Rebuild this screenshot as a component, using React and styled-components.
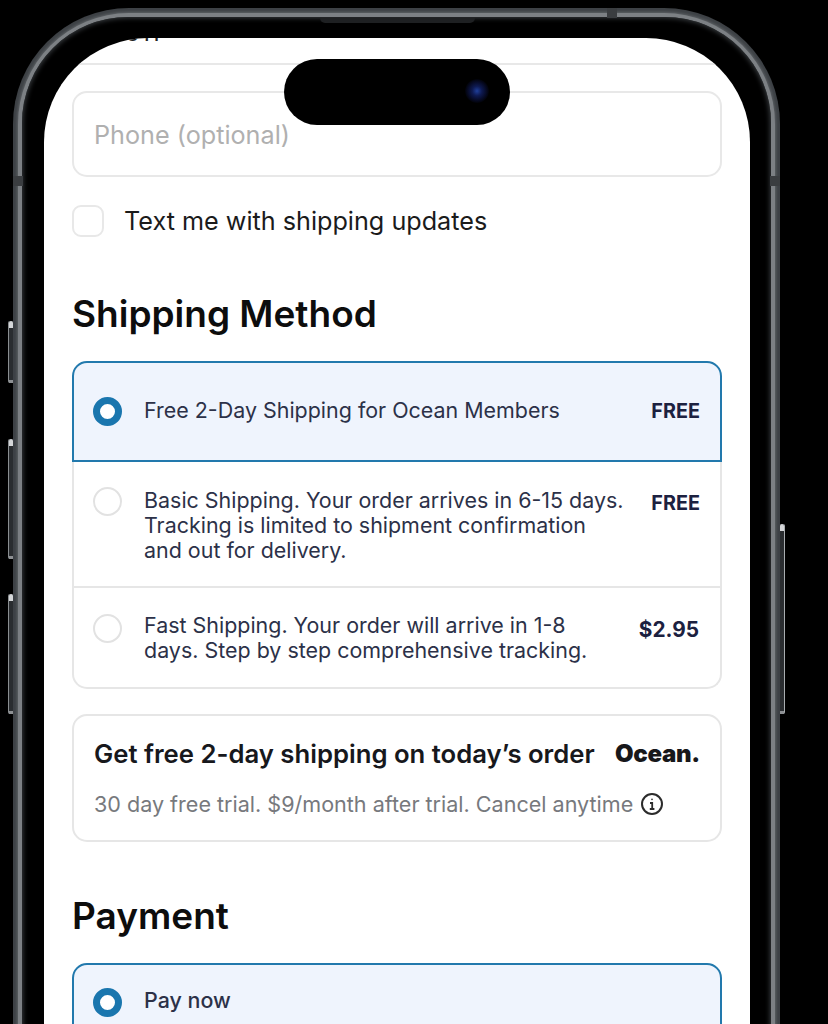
import React from 'react';
import styled, { createGlobalStyle } from 'styled-components';

const GlobalStyle = createGlobalStyle`
    html, body {
        margin: 0;
        padding: 0;
        background: #000;
    }
    body {
        font-family: Inter, "Liberation Sans", sans-serif;
    }
`

const Page = styled.div`
    width: 828px;
    height: 1024px;
    overflow: hidden;
    background: #000;
    padding: 8px 0 0 13px;
    box-sizing: border-box;
`
const Phone = styled.div`
    position: relative;
    width: 767px;
    height: 1300px;
`
const Frame = styled.div`
    height: 100%;
    box-sizing: border-box;
    padding: 5px;
    border-radius: 116px;
    background: #3d4145;
`
const Ring = styled.div`
    height: 100%;
    box-sizing: border-box;
    padding: 4px;
    border-radius: 111px;
    background: #7c8084;
    box-shadow: 0 0 3px 1px #5f6367;
`
const Bezel = styled.div`
    height: 100%;
    box-sizing: border-box;
    padding: 21px 21px 21px 22px;
    border-radius: 106px;
    background: #000;
    box-shadow: inset 0 0 5px 1px #3a3e42;
`
const Screen = styled.div`
    height: 100%;
    box-sizing: border-box;
    padding: 0 28px;
    border-radius: 104px;
    background: #fff;
    overflow: hidden;
`
const Island = styled.div`
    position: absolute;
    top: 51px;
    left: 271px;
    width: 226px;
    height: 66px;
    border-radius: 33px;
    background: #000;
`
const Camera = styled.div`
    position: absolute;
    top: 20px;
    right: 21px;
    width: 24px;
    height: 24px;
    border-radius: 50%;
    background: radial-gradient(circle, #1f3f9a 0, #0e1a52 28%, #060a24 55%, #000 75%);
`
const Speaker = styled.div`
    position: absolute;
    top: 10px;
    left: 307px;
    width: 155px;
    height: 5px;
    border-radius: 0 0 6px 6px;
    background: #1e2022;
`
const Antenna = styled.div`
    position: absolute;
    background: #3a3d40;
    ${p => p.$top ? `top: 0; left: 594px; width: 10px; height: 10px;` : `top: 168px; width: 10px; height: 10px;`}
    ${p => p.$side === 'left' ? 'left: 0;' : ''}
    ${p => p.$side === 'right' ? 'right: 0;' : ''}
`
const SideButton = styled.div`
    position: absolute;
    top: ${p => p.$top}px;
    height: ${p => p.$height}px;
    width: 5px;
    box-sizing: border-box;
    background: #2a2d30;
    ${p => p.$right
        ? 'right: -5px; border-right: 1px solid #a9adb0; border-radius: 0 2px 2px 0;'
        : 'left: -5px; border-left: 1px solid #8a8e91; border-radius: 2px 0 0 2px;'}
    &::before {
        content: '';
        position: absolute;
        top: 0;
        left: 0;
        right: 0;
        height: 7px;
        background: #d4d6d8;
        border-radius: 2px 2px 0 0;
    }
    &::after {
        content: '';
        position: absolute;
        bottom: 0;
        left: 0;
        right: 0;
        height: 3px;
        background: #8d9093;
    }
`
const PrevField = styled.div`
    height: 60px;
    margin-top: -33px;
    box-sizing: border-box;
    border-bottom: 2px solid #e8e8e8;
    padding-left: 53px;
    font-size: 24px;
    line-height: 55px;
    color: #222;
`
const Field = styled.div`
    height: 86px;
    margin-top: 26px;
    box-sizing: border-box;
    display: flex;
    align-items: center;
    padding: 2px 21px 0 20px;
    border: 2px solid #e8e8e8;
    border-radius: 15px;
    font-size: 25.2px;
    color: #b0b0b0;
`
const CheckRow = styled.div`
    display: flex;
    align-items: center;
    gap: 20px;
    margin-top: 28px;
    font-size: 25.2px;
    color: #1b1b1b;
`
const CheckBox = styled.span`
    width: 32px;
    height: 32px;
    box-sizing: border-box;
    border: 2px solid #e8e8e8;
    border-radius: 9px;
`
const Heading = styled.h2`
    margin: ${p => p.$top}px 0 0;
    font-size: 37px;
    line-height: 44px;
    font-weight: 600;
    color: #0d0d0d;
`
const OptionList = styled.div`
    margin-top: ${p => p.$top}px;
    display: flex;
    flex-direction: column;
`
const Option = styled.div`
    display: grid;
    grid-template-columns: 29px 1fr auto;
    column-gap: 22px;
    align-items: start;
    box-sizing: border-box;
    height: ${p => p.$height}px;
    padding: ${p => p.$pad}px 20px 0 19px;
    background: ${p => p.$selected ? '#eff4fd' : '#fff'};
    border: 2px solid ${p => p.$selected ? '#2279ad' : '#e6e6e6'};
    border-top: ${p => p.$selected ? '2px solid #2279ad' : 'none'};
    border-radius: ${p => p.$selected ? '15px 15px 0 0' : p.$last ? '0 0 15px 15px' : '0'};
`
const Radio = styled.span`
    width: 29px;
    height: 29px;
    box-sizing: border-box;
    border-radius: 50%;
    background: #fff;
    border: ${p => p.$on ? '7px solid #1a76ae' : '2px solid #e2e2e2'};
    margin-top: ${p => p.$nudge ?? -1}px;
`
const OptionText = styled.div`
    font-size: 21.45px;
    line-height: 25px;
    font-weight: ${p => p.$medium ? 500 : 400};
    color: #2c3148;
`
const Price = styled.div`
    font-size: ${p => p.$size}px;
    line-height: 25px;
    font-weight: 700;
    color: #1c2140;
    padding-top: ${p => p.$nudge}px;
    padding-right: ${p => p.$inset || 0}px;
`
const OfferCard = styled.div`
    margin-top: 25px;
    height: 128px;
    box-sizing: border-box;
    border: 2px solid #e6e6e6;
    border-radius: 15px;
    padding: 23px 20px 0 20px;
`
const OfferTop = styled.div`
    display: flex;
    justify-content: space-between;
    align-items: center;
    font-size: 25.7px;
    line-height: 30px;
    font-weight: 600;
    color: #17181c;
`
const OceanLogo = styled.span`
    font-size: 24px;
    font-weight: 900;
    letter-spacing: -0.3px;
    color: #17171a;
`
const OfferNote = styled.div`
    display: flex;
    align-items: center;
    gap: 7px;
    margin-top: 20px;
    font-size: 21.55px;
    line-height: 30px;
    color: #77797d;
`
const InfoIcon = () => (
    <svg width="24" height="24" viewBox="0 0 24 24" fill="none" stroke="#2b2b2b" strokeWidth="2">
        <circle cx="12" cy="12" r="10" />
        <path d="M10 11h2.2v6M9.8 17h4.6" strokeWidth="1.8" />
        <circle cx="12" cy="7.4" r="0.8" fill="#2b2b2b" stroke="none" />
    </svg>
)

const App = () => {
    return (
        <>
            <GlobalStyle />
            <Page>
                <Phone>
                    <Frame>
                        <Ring>
                            <Bezel>
                                <Screen>
                                    <PrevField>011</PrevField>
                                    <Field>Phone (optional)</Field>
                                    <CheckRow>
                                        <CheckBox />
                                        Text me with shipping updates
                                    </CheckRow>
                                    <Heading $top={55}>Shipping Method</Heading>
                                    <OptionList $top={25}>
                                        <Option $selected $height={101} $pad={35}>
                                            <Radio $on />
                                            <OptionText>Free 2-Day Shipping for Ocean Members</OptionText>
                                            <Price $size={19.8} $nudge={1}>FREE</Price>
                                        </Option>
                                        <Option $height={126} $pad={26}>
                                            <Radio />
                                            <OptionText>
                                                Basic Shipping. Your order arrives in 6-15 days.<br />
                                                Tracking is limited to shipment confirmation<br />
                                                and out for delivery.
                                            </OptionText>
                                            <Price $size={19.8} $nudge={3}>FREE</Price>
                                        </Option>
                                        <Option $last $height={101} $pad={25}>
                                            <Radio $nudge={1} />
                                            <OptionText>
                                                Fast Shipping. Your order will arrive in 1-8<br />
                                                days. Step by step comprehensive tracking.
                                            </OptionText>
                                            <Price $size={20.8} $nudge={4} $inset={1}>$2.95</Price>
                                        </Option>
                                    </OptionList>
                                    <OfferCard>
                                        <OfferTop>
                                            Get free 2-day shipping on today’s order
                                            <OceanLogo>Ocean.</OceanLogo>
                                        </OfferTop>
                                        <OfferNote>
                                            30 day free trial. $9/month after trial. Cancel anytime
                                            <InfoIcon />
                                        </OfferNote>
                                    </OfferCard>
                                    <Heading $top={52}>Payment</Heading>
                                    <OptionList $top={25}>
                                        <Option $selected $height={101} $pad={23}>
                                            <Radio $on $nudge={0} />
                                            <OptionText $medium>Pay now</OptionText>
                                        </Option>
                                    </OptionList>
                                </Screen>
                            </Bezel>
                        </Ring>
                    </Frame>
                    <Speaker />
                    <Antenna $top />
                    <Antenna $side="left" />
                    <Antenna $side="right" />
                    <Island><Camera /></Island>
                    <SideButton $top={313} $height={62} />
                    <SideButton $top={431} $height={120} />
                    <SideButton $top={586} $height={120} />
                    <SideButton $right $top={516} $height={190} />
                </Phone>
            </Page>
        </>
    )
}

export default App;
